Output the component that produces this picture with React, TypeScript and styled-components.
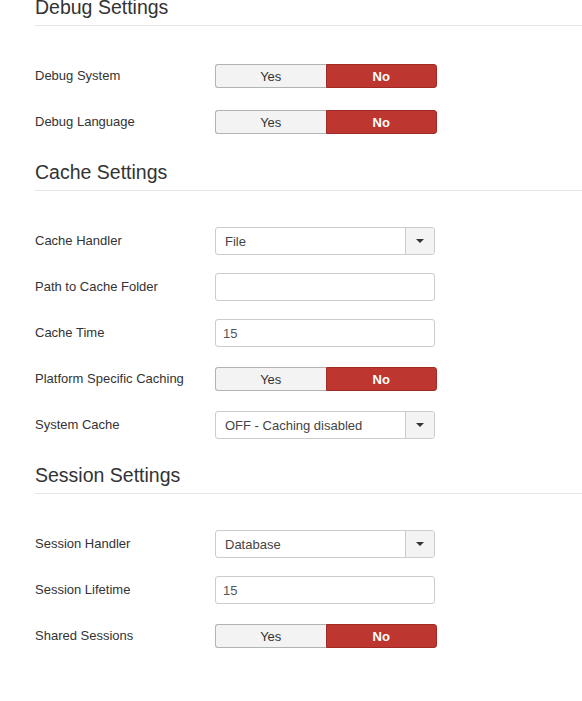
import React from "react";
import styled, { createGlobalStyle } from "styled-components";

const GlobalStyle = createGlobalStyle`
  html, body {
    margin: 0;
    padding: 0;
    background: #fff;
  }
  body {
    font-family: "Liberation Sans", Arial, Helvetica, sans-serif;
    font-size: 13px;
    color: #333;
  }
`;

const Page = styled.div`
  margin-top: -8px;
  padding-left: 35px;
  width: 547px;
  overflow: hidden;
`;

const Heading = styled.h3<{ $first?: boolean }>`
  margin: ${(p) => (p.$first ? "0" : "21px")} 0 36px;
  padding-bottom: 3px;
  font-size: 19.5px;
  line-height: 30px;
  font-weight: normal;
  color: #333;
  border-bottom: 1px solid #e5e5e5;
`;

const Row = styled.div`
  display: flex;
  align-items: center;
  height: 28px;
  margin-bottom: 18px;
`;

const Label = styled.label`
  width: 180px;
  font-size: 13px;
  line-height: 18px;
  color: #333;
`;

const Toggle = styled.div`
  display: flex;
  width: 222px;
  height: 24px;
`;

const ToggleBtn = styled.span<{ $active?: boolean }>`
  flex: 1;
  display: flex;
  align-items: center;
  justify-content: center;
  font-size: 13px;
  box-sizing: border-box;
  ${(p) =>
    p.$active
      ? `
    background: #bd362f;
    color: #fff;
    font-weight: bold;
    border: 1px solid #a02b25;
    border-radius: 0 3px 3px 0;
  `
      : `
    background: #f3f3f3;
    color: #333;
    border: 1px solid #b3b3b3;
    border-right: none;
    border-radius: 3px 0 0 3px;
  `}
`;

const TextInput = styled.div`
  box-sizing: border-box;
  width: 220px;
  height: 28px;
  padding: 0 7px;
  display: flex;
  align-items: center;
  border: 1px solid #ccc;
  border-radius: 3px;
  background: #fff;
  color: #555;
  font-size: 13px;
`;

const Select = styled.div`
  box-sizing: border-box;
  width: 220px;
  height: 28px;
  display: flex;
  border: 1px solid #ccc;
  border-radius: 3px;
  background: #fff;
  overflow: hidden;
`;

const SelectValue = styled.span`
  flex: 1;
  display: flex;
  align-items: center;
  padding-left: 9px;
  color: #444;
  font-size: 13px;
`;

const SelectArrow = styled.span`
  width: 28px;
  display: flex;
  align-items: center;
  justify-content: center;
  background: #f3f3f3;
  border-left: 1px solid #ccc;

  &::after {
    content: "";
    border-left: 4px solid transparent;
    border-right: 4px solid transparent;
    border-top: 4px solid #333;
  }
`;

type Field =
  | { label: string; kind: "toggle" }
  | { label: string; kind: "select"; value: string }
  | { label: string; kind: "text"; value: string };

const sections: { title: string; fields: Field[] }[] = [
  {
    title: "Debug Settings",
    fields: [
      { label: "Debug System", kind: "toggle" },
      { label: "Debug Language", kind: "toggle" },
    ],
  },
  {
    title: "Cache Settings",
    fields: [
      { label: "Cache Handler", kind: "select", value: "File" },
      { label: "Path to Cache Folder", kind: "text", value: "" },
      { label: "Cache Time", kind: "text", value: "15" },
      { label: "Platform Specific Caching", kind: "toggle" },
      { label: "System Cache", kind: "select", value: "OFF - Caching disabled" },
    ],
  },
  {
    title: "Session Settings",
    fields: [
      { label: "Session Handler", kind: "select", value: "Database" },
      { label: "Session Lifetime", kind: "text", value: "15" },
      { label: "Shared Sessions", kind: "toggle" },
    ],
  },
];

const Control = ({ field }: { field: Field }) => {
  if (field.kind === "toggle") {
    return (
      <Toggle>
        <ToggleBtn>Yes</ToggleBtn>
        <ToggleBtn $active>No</ToggleBtn>
      </Toggle>
    );
  }
  if (field.kind === "select") {
    return (
      <Select>
        <SelectValue>{field.value}</SelectValue>
        <SelectArrow />
      </Select>
    );
  }
  return <TextInput>{field.value}</TextInput>;
};

const App: React.FC = () => {
  return (
    <>
      <GlobalStyle />
      <Page>
        {sections.map((section, i) => (
          <section key={section.title}>
            <Heading $first={i === 0}>{section.title}</Heading>
            {section.fields.map((field) => (
              <Row key={field.label}>
                <Label>{field.label}</Label>
                <Control field={field} />
              </Row>
            ))}
          </section>
        ))}
      </Page>
    </>
  );
};

export default App;
